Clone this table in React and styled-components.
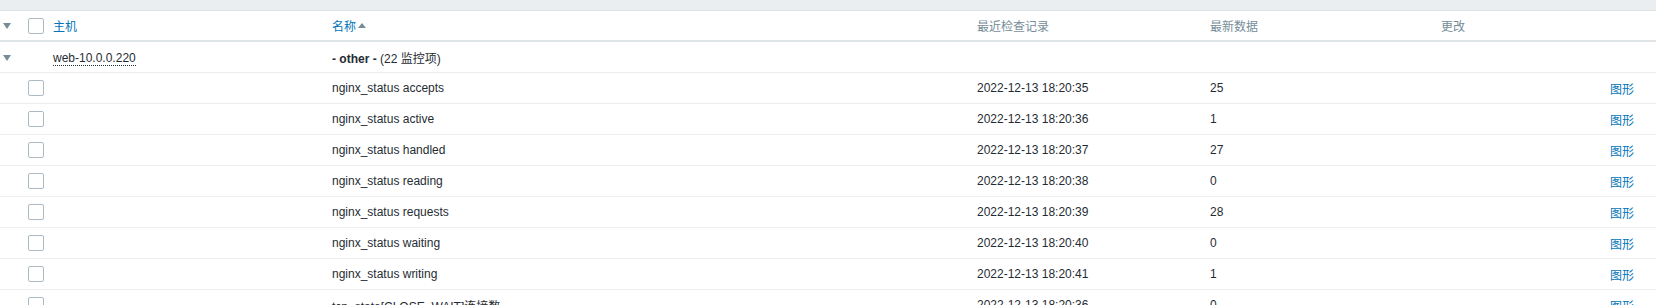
import React from "react";
import styled, { createGlobalStyle } from "styled-components";

const GlobalStyle = createGlobalStyle`
    body {
        margin: 0;
        background: #ffffff;
        font-family: "Liberation Sans", Arial, "Noto Sans CJK SC", sans-serif;
        font-size: 12px;
        color: #1f2c33;
    }
`;

const columns = "23px 25px 279px 645px 233px 231px 1fr 60px";

const TopBar = styled.div`
    height: 10px;
    background: #ebeef0;
    border-bottom: 1px solid #dfe4e7;
`;

const Row = styled.div`
    display: grid;
    grid-template-columns: ${columns};
    align-items: center;
    height: ${props => props.$height || 30}px;
    border-bottom: ${props => props.$thick ? "2px solid #dfe4e7" : "1px solid #ebeef0"};
`;

const Cell = styled.div`
    padding: 0 5px;
    white-space: nowrap;
    overflow: hidden;
    text-align: ${props => props.$right ? "right" : "left"};
    padding-right: ${props => props.$right ? "22px" : "5px"};
`;

const ToggleCell = styled.div`
    padding-left: 3px;
`;

const HeadText = styled.span`
    color: ${props => props.$link ? "#0275b8" : "#768d99"};
    display: inline-flex;
    align-items: center;
`;

const SortArrow = styled.span`
    display: inline-block;
    width: 0;
    height: 0;
    margin-left: 2px;
    border-left: 4px solid transparent;
    border-right: 4px solid transparent;
    border-bottom: 5px solid #768d99;
`;

const Toggle = styled.span`
    display: block;
    width: 0;
    height: 0;
    margin-top: 1px;
    border-left: 4px solid transparent;
    border-right: 4px solid transparent;
    border-top: 6px solid #768d99;
`;

const Checkbox = styled.span`
    display: block;
    width: 14px;
    height: 14px;
    border: 1px solid #acbbc2;
    border-radius: 2px;
    background: #ffffff;
`;

const HostName = styled.span`
    display: inline-block;
    line-height: 14px;
    margin-top: 3px;
    border-bottom: 1px dotted #1f2c33;
`;

const Bold = styled.b`
    font-weight: bold;
`;

const Link = styled.span`
    color: #0275b8;
`;

const items = [
    ["nginx_status accepts", "2022-12-13 18:20:35", "25"],
    ["nginx_status active", "2022-12-13 18:20:36", "1"],
    ["nginx_status handled", "2022-12-13 18:20:37", "27"],
    ["nginx_status reading", "2022-12-13 18:20:38", "0"],
    ["nginx_status requests", "2022-12-13 18:20:39", "28"],
    ["nginx_status waiting", "2022-12-13 18:20:40", "0"],
    ["nginx_status writing", "2022-12-13 18:20:41", "1"],
    ["tcp_state[CLOSE_WAIT]连接数", "2022-12-13 18:20:36", "0"],
];

export default function App() {
    return (
        <>
            <GlobalStyle/>
            <TopBar/>
            <Row $height={29} $thick>
                <ToggleCell><Toggle/></ToggleCell>
                <Cell><Checkbox/></Cell>
                <Cell><HeadText $link>主机</HeadText></Cell>
                <Cell><HeadText $link>名称<SortArrow/></HeadText></Cell>
                <Cell><HeadText>最近检查记录</HeadText></Cell>
                <Cell><HeadText>最新数据</HeadText></Cell>
                <Cell><HeadText>更改</HeadText></Cell>
                <Cell/>
            </Row>
            <Row>
                <ToggleCell><Toggle/></ToggleCell>
                <Cell/>
                <Cell><HostName>web-10.0.0.220</HostName></Cell>
                <Cell><Bold>- other -</Bold> (22 监控项)</Cell>
                <Cell/>
                <Cell/>
                <Cell/>
                <Cell/>
            </Row>
            {items.map(([name, time, value], index) =>
                <Row key={index}>
                    <Cell/>
                    <Cell><Checkbox/></Cell>
                    <Cell/>
                    <Cell>{name}</Cell>
                    <Cell>{time}</Cell>
                    <Cell>{value}</Cell>
                    <Cell/>
                    <Cell $right><Link>图形</Link></Cell>
                </Row>
            )}
        </>
    );
}
